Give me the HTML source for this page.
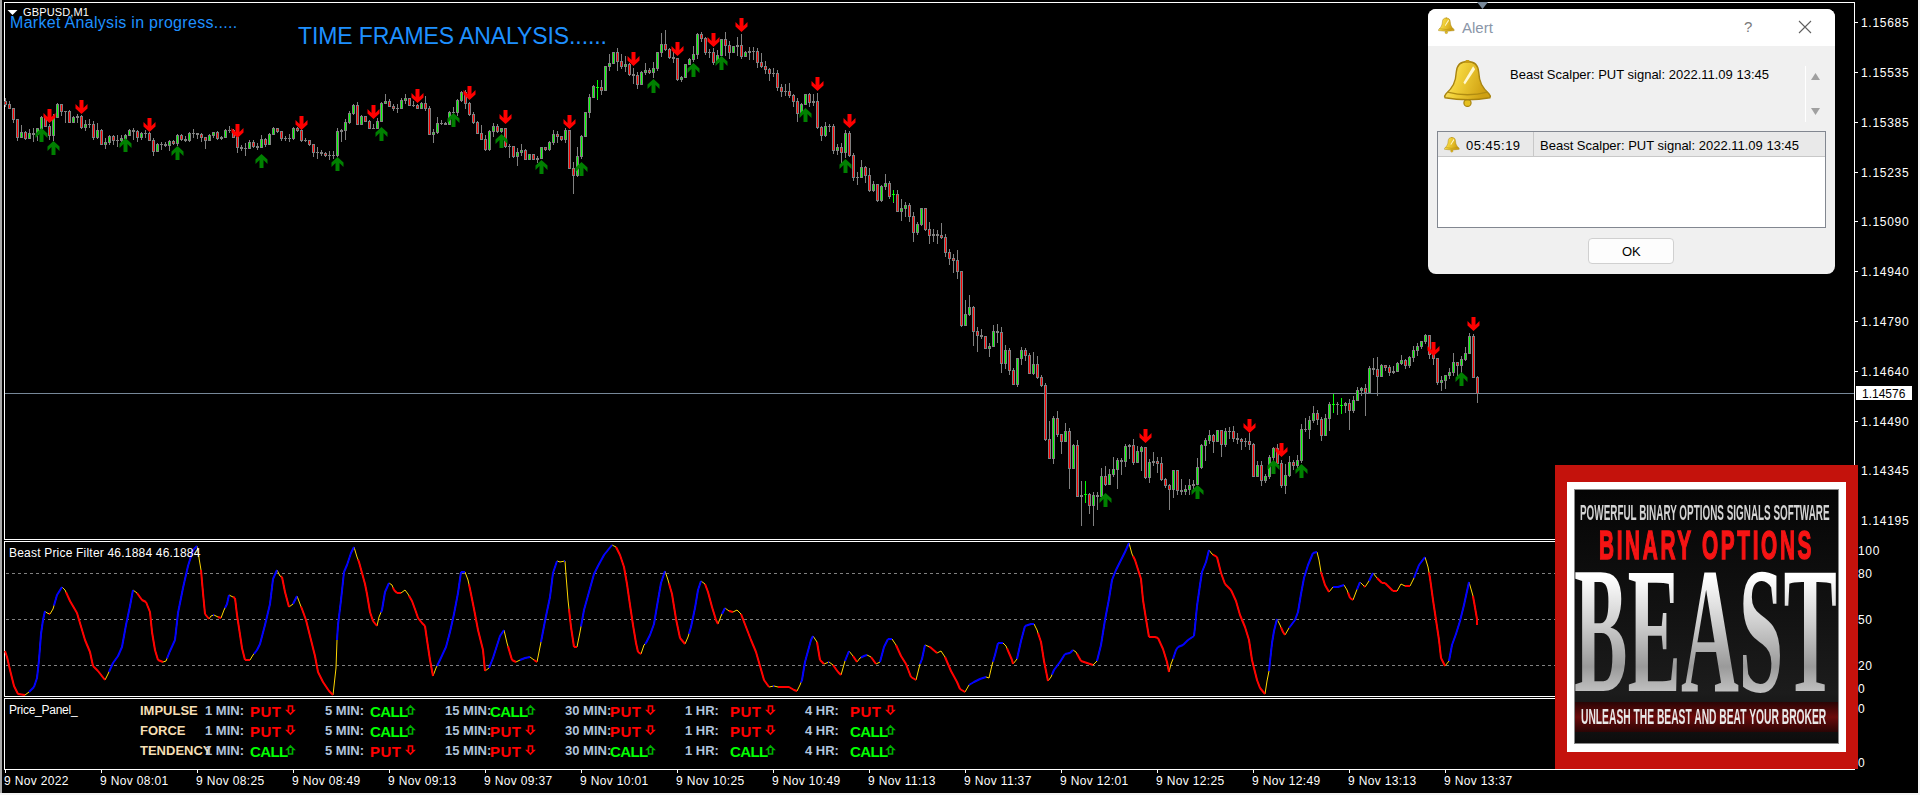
<!DOCTYPE html><html><head><meta charset="utf-8"><style>

*{margin:0;padding:0;box-sizing:border-box}
html,body{width:1920px;height:795px;overflow:hidden;background:#000}
body{position:relative;font-family:"Liberation Sans",sans-serif}
#chart{position:absolute;left:0;top:0}
.t{position:absolute;white-space:nowrap;line-height:1}
.w{color:#fff}
.pl{font-size:12px;color:#fff;left:1861px;letter-spacing:0.7px}
.tl{font-size:12px;color:#fff;top:775px;letter-spacing:0.35px}
.pp{font-weight:bold;font-size:13px}
.lab{color:#f5deb3}
.mn{color:#b0c4de}
.put{color:#ff0000;font-size:15px;letter-spacing:0.4px}
.call{color:#00ff00;font-size:15px;letter-spacing:-0.6px}

</style></head><body>
<svg id="chart" width="1920" height="795" viewBox="0 0 1920 795" shape-rendering="crispEdges">
<g fill="#ffffff">
<rect x="4" y="2" width="1851" height="1"/><rect x="4" y="539" width="1851" height="1"/>
<rect x="4" y="2" width="1" height="538"/><rect x="1854" y="2" width="1" height="538"/>
<rect x="4" y="541" width="1851" height="1"/><rect x="4" y="696" width="1851" height="1"/>
<rect x="4" y="541" width="1" height="156"/><rect x="1854" y="541" width="1" height="156"/>
<rect x="4" y="698" width="1851" height="1"/><rect x="4" y="769" width="1851" height="1"/>
<rect x="4" y="698" width="1" height="72"/><rect x="1854" y="698" width="1" height="72"/>
<rect x="1855" y="22" width="3" height="1"/>
<rect x="1855" y="72" width="3" height="1"/>
<rect x="1855" y="122" width="3" height="1"/>
<rect x="1855" y="172" width="3" height="1"/>
<rect x="1855" y="221" width="3" height="1"/>
<rect x="1855" y="271" width="3" height="1"/>
<rect x="1855" y="321" width="3" height="1"/>
<rect x="1855" y="371" width="3" height="1"/>
<rect x="1855" y="421" width="3" height="1"/>
<rect x="1855" y="470" width="3" height="1"/>
<rect x="1855" y="520" width="3" height="1"/>
<rect x="5" y="770" width="1" height="3"/>
<rect x="101" y="770" width="1" height="3"/>
<rect x="197" y="770" width="1" height="3"/>
<rect x="293" y="770" width="1" height="3"/>
<rect x="389" y="770" width="1" height="3"/>
<rect x="485" y="770" width="1" height="3"/>
<rect x="581" y="770" width="1" height="3"/>
<rect x="677" y="770" width="1" height="3"/>
<rect x="773" y="770" width="1" height="3"/>
<rect x="869" y="770" width="1" height="3"/>
<rect x="965" y="770" width="1" height="3"/>
<rect x="1061" y="770" width="1" height="3"/>
<rect x="1157" y="770" width="1" height="3"/>
<rect x="1253" y="770" width="1" height="3"/>
<rect x="1349" y="770" width="1" height="3"/>
<rect x="1445" y="770" width="1" height="3"/>
</g>
<rect x="0" y="0" width="2" height="795" fill="#a9a9a9"/>
<rect x="1918" y="0" width="2" height="795" fill="#f4f4f4"/>
<rect x="0" y="793" width="1920" height="2" fill="#f4f4f4"/>
<path d="M6 573.5H1853" stroke="#808080" stroke-width="1" stroke-dasharray="3 3"/>
<path d="M6 619.5H1853" stroke="#808080" stroke-width="1" stroke-dasharray="3 3"/>
<path d="M6 665.5H1853" stroke="#808080" stroke-width="1" stroke-dasharray="3 3"/>
<rect x="5" y="393" width="1849" height="1" fill="#778899"/>
<polygon points="1477,2 1488,2 1482.5,9" fill="#778899" shape-rendering="auto"/>
<g shape-rendering="auto">
<path fill="none" stroke="#808080" stroke-width="1" d="M5.5 98V101M5.5 105V107M9.5 101V104M13.5 120V123M17.5 138V141M21.5 125V132M25.5 131V132M25.5 139V140M29.5 129V133M33.5 128V133M33.5 135V142M37.5 135V141M41.5 116V117M45.5 116V117M49.5 124V126M49.5 136V140M53.5 114V117M53.5 136V141M57.5 103V104M61.5 112V116M65.5 112V123M69.5 110V111M73.5 116V117M77.5 114V116M77.5 118V123M81.5 115V116M81.5 128V129M85.5 120V124M85.5 128V131M89.5 119V124M89.5 125V128M93.5 121V124M93.5 138V140M97.5 123V130M97.5 138V139M101.5 129V130M105.5 138V142M105.5 145V149M109.5 135V136M109.5 143V145M113.5 135V136M113.5 141V145M117.5 135V140M117.5 141V147M121.5 135V138M121.5 141V144M125.5 134V135M129.5 129V130M133.5 128V130M133.5 132V140M137.5 130V131M137.5 138V142M141.5 132V133M141.5 138V140M145.5 130V133M145.5 134V138M149.5 132V133M153.5 138V140M153.5 152V156M157.5 143V144M161.5 142V144M161.5 145V150M165.5 142V144M165.5 146V147M169.5 140V141M169.5 146V151M173.5 140V141M173.5 144V145M177.5 134V135M177.5 144V146M181.5 134V135M181.5 140V141M185.5 136V139M185.5 141V142M189.5 132V133M189.5 141V142M193.5 129V133M193.5 134V138M197.5 135V139M201.5 133V134M201.5 138V142M205.5 141V149M209.5 134V135M213.5 136V138M217.5 131V132M217.5 139V140M221.5 136V137M221.5 139V140M225.5 129V130M229.5 126V130M229.5 131V133M233.5 129V130M237.5 136V137M237.5 148V153M241.5 145V147M241.5 149V151M245.5 143V148M245.5 149V156M249.5 140V142M253.5 140V142M253.5 147V148M257.5 143V146M257.5 148V150M261.5 135V139M265.5 138V139M265.5 145V147M269.5 133V134M273.5 127V128M277.5 132V133M281.5 139V141M285.5 136V138M285.5 139V141M289.5 134V138M289.5 139V142M293.5 127V128M293.5 139V140M297.5 127V128M297.5 131V132M301.5 128V130M301.5 141V142M305.5 138V140M305.5 141V142M309.5 145V146M313.5 153V157M317.5 147V152M317.5 153V159M321.5 150V152M321.5 154V156M325.5 152V153M325.5 156V157M329.5 151V155M329.5 156V160M333.5 151V155M333.5 156V159M337.5 128V131M337.5 156V157M341.5 129V130M341.5 132V142M345.5 119V122M345.5 131V140M349.5 111V113M349.5 123V124M353.5 104V105M353.5 114V115M357.5 102V105M361.5 115V116M369.5 120V121M373.5 124V128M377.5 118V121M381.5 102V103M385.5 94V101M389.5 99V101M393.5 104V106M393.5 109V111M397.5 104V108M397.5 109V113M401.5 98V100M405.5 94V98M405.5 101V104M413.5 101V105M413.5 106V107M417.5 104V105M421.5 102V103M425.5 96V103M425.5 109V111M429.5 106V108M433.5 129V132M433.5 135V143M437.5 117V123M437.5 133V134M441.5 120V123M441.5 124V125M445.5 122V123M449.5 111V112M453.5 107V112M453.5 113V116M457.5 99V100M457.5 113V116M461.5 91V92M461.5 101V102M465.5 90V92M465.5 104V109M469.5 102V103M469.5 115V116M473.5 112V114M473.5 123V124M477.5 121V122M481.5 125V133M485.5 135V139M485.5 150V151M489.5 130V131M489.5 150V151M493.5 123V126M493.5 132V137M497.5 124V126M497.5 132V133M501.5 132V133M505.5 147V148M509.5 144V146M509.5 147V158M513.5 157V158M517.5 148V152M517.5 157V166M521.5 144V150M521.5 153V156M525.5 149V150M537.5 156V158M537.5 160V163M545.5 150V151M549.5 141V142M549.5 150V151M553.5 130V134M553.5 143V145M557.5 131V134M557.5 137V143M561.5 140V141M565.5 128V130M565.5 140V143M573.5 162V168M573.5 176V194M577.5 147V156M577.5 176V177M581.5 135V136M581.5 157V159M589.5 94V97M589.5 113V118M593.5 85V86M597.5 87V100M601.5 80V87M601.5 91V95M609.5 54V63M609.5 67V71M617.5 48V52M617.5 62V71M621.5 54V61M621.5 67V69M625.5 56V64M625.5 67V72M629.5 63V64M629.5 75V76M633.5 68V74M633.5 76V84M637.5 72V75M637.5 85V89M641.5 71V72M645.5 63V70M645.5 73V75M649.5 68V70M649.5 73V74M653.5 62V68M653.5 73V78M657.5 69V71M661.5 33V44M661.5 53V57M665.5 30V44M665.5 50V51M669.5 48V49M669.5 58V59M673.5 52V57M673.5 59V63M677.5 80V81M681.5 76V77M681.5 80V82M689.5 58V59M693.5 46V54M693.5 60V62M697.5 33V34M697.5 55V59M701.5 32V34M701.5 39V42M705.5 37V38M705.5 53V55M709.5 49V52M709.5 53V58M713.5 48V52M713.5 63V65M717.5 50V55M725.5 32V39M725.5 46V56M729.5 41V45M729.5 53V59M737.5 37V45M737.5 47V56M741.5 34V45M741.5 57V59M745.5 51V52M749.5 47V51M749.5 53V60M753.5 47V51M753.5 52V60M757.5 48V51M757.5 63V68M761.5 53V62M761.5 67V68M765.5 61V66M765.5 70V74M769.5 68V69M769.5 74V81M773.5 68V73M773.5 74V77M777.5 70V73M777.5 88V91M781.5 84V87M781.5 92V97M785.5 84V91M785.5 92V96M789.5 83V91M789.5 96V98M793.5 94V95M793.5 102V107M797.5 98V101M797.5 114V122M801.5 103V104M809.5 93V94M809.5 103V107M813.5 94V101M813.5 103V106M817.5 93V101M817.5 128V129M821.5 126V127M821.5 136V141M825.5 122V126M825.5 136V137M829.5 124V126M829.5 127V132M833.5 124V126M833.5 151V154M837.5 144V147M837.5 151V155M841.5 143V147M841.5 153V163M845.5 130V133M845.5 153V158M849.5 131V133M849.5 156V157M853.5 153V155M853.5 178V181M857.5 172V177M857.5 178V185M861.5 160V167M865.5 166V167M865.5 176V183M869.5 168V175M869.5 191V192M873.5 181V184M873.5 191V192M877.5 201V202M881.5 185V186M881.5 201V202M885.5 174V183M885.5 187V190M889.5 181V183M889.5 197V199M893.5 190V192M893.5 197V203M897.5 190V194M901.5 199V208M901.5 212V221M905.5 202V205M905.5 209V217M909.5 203V205M909.5 217V222M913.5 212V216M913.5 233V242M917.5 222V224M917.5 233V235M921.5 225V226M925.5 230V231M929.5 222V229M929.5 236V244M933.5 229V234M933.5 236V242M937.5 230V234M937.5 236V244M941.5 223V235M941.5 238V239M945.5 234V237M945.5 253V257M949.5 249V252M949.5 259V265M953.5 254V258M953.5 261V273M957.5 250V260M957.5 272V279M961.5 326V327M965.5 300V314M969.5 295V307M969.5 315V316M973.5 306V307M973.5 332V346M977.5 327V331M977.5 336V352M981.5 329V335M981.5 337V339M989.5 343V346M989.5 349V357M993.5 325V331M997.5 324V331M997.5 333V343M1001.5 327V332M1001.5 364V373M1005.5 345V350M1005.5 364V369M1009.5 348V350M1009.5 371V375M1013.5 368V370M1017.5 385V387M1021.5 347V350M1021.5 359V365M1025.5 348V350M1025.5 356V361M1029.5 353V355M1033.5 352V364M1033.5 374V375M1037.5 356V364M1037.5 378V379M1041.5 375V377M1041.5 386V387M1045.5 383V385M1045.5 440V441M1049.5 421V439M1053.5 416V418M1053.5 459V464M1057.5 411V418M1057.5 435V437M1061.5 442V454M1065.5 423V431M1069.5 428V431M1069.5 469V489M1073.5 444V445M1077.5 440V445M1081.5 481V495M1081.5 497V526M1085.5 496V503M1089.5 493V494M1089.5 506V514M1093.5 492V495M1093.5 506V526M1097.5 492V495M1097.5 497V510M1101.5 468V476M1101.5 497V498M1105.5 466V476M1105.5 485V486M1109.5 469V474M1113.5 457V469M1113.5 475V477M1117.5 458V460M1117.5 470V489M1121.5 458V460M1121.5 462V475M1125.5 444V446M1125.5 462V467M1129.5 444V445M1129.5 447V459M1133.5 439V445M1133.5 463V465M1137.5 446V451M1141.5 446V447M1141.5 452V471M1145.5 478V479M1149.5 459V462M1149.5 478V483M1153.5 452V461M1153.5 463V466M1157.5 457V461M1157.5 464V473M1161.5 457V463M1161.5 480V481M1165.5 478V479M1165.5 486V488M1169.5 484V485M1169.5 490V510M1173.5 490V498M1177.5 491V495M1181.5 479V490M1181.5 492V495M1185.5 485V489M1185.5 492V495M1189.5 479V485M1189.5 490V495M1193.5 480V484M1193.5 486V489M1197.5 458V467M1201.5 444V445M1201.5 468V469M1205.5 438V440M1205.5 446V461M1209.5 430V435M1209.5 441V444M1213.5 434V435M1213.5 442V453M1221.5 445V457M1225.5 428V431M1225.5 445V447M1229.5 427V431M1229.5 432V439M1233.5 426V431M1233.5 439V442M1237.5 433V438M1237.5 440V444M1241.5 438V439M1241.5 442V450M1245.5 438V441M1245.5 442V447M1249.5 433V441M1249.5 445V450M1253.5 443V444M1257.5 461V465M1261.5 461V465M1261.5 481V486M1265.5 474V476M1265.5 481V483M1269.5 455V457M1269.5 477V479M1273.5 447V448M1273.5 458V461M1277.5 444V448M1277.5 464V465M1281.5 460V463M1281.5 486V488M1285.5 464V475M1285.5 486V494M1289.5 456V462M1289.5 476V477M1293.5 460V462M1293.5 466V470M1297.5 455V460M1297.5 466V468M1301.5 424V429M1301.5 461V463M1305.5 418V429M1305.5 430V432M1309.5 416V420M1309.5 430V439M1313.5 406V413M1313.5 421V423M1317.5 410V413M1317.5 420V425M1321.5 417V419M1321.5 436V441M1325.5 414V418M1329.5 402V404M1329.5 419V431M1333.5 394V404M1333.5 405V413M1337.5 402V404M1337.5 405V415M1341.5 398V404M1341.5 407V414M1345.5 402V403M1345.5 406V413M1349.5 399V403M1349.5 411V430M1353.5 396V400M1353.5 411V413M1357.5 387V390M1361.5 387V388M1361.5 391V396M1365.5 384V388M1365.5 393V416M1369.5 366V368M1369.5 393V394M1373.5 358V368M1373.5 370V375M1377.5 357V369M1377.5 377V396M1381.5 364V365M1385.5 368V371M1389.5 365V367M1389.5 373V376M1393.5 366V371M1393.5 373V374M1397.5 362V363M1401.5 355V360M1401.5 364V365M1405.5 359V360M1405.5 366V369M1409.5 356V357M1409.5 366V368M1413.5 346V350M1413.5 358V362M1417.5 343V346M1417.5 351V356M1421.5 347V349M1425.5 334V335M1425.5 342V344M1429.5 355V359M1433.5 352V354M1433.5 359V365M1437.5 383V385M1441.5 376V380M1441.5 383V391M1445.5 381V389M1449.5 368V372M1449.5 376V379M1453.5 353V362M1453.5 373V376M1457.5 366V376M1461.5 356V359M1461.5 366V373M1465.5 347V353M1465.5 360V361M1469.5 333V336M1473.5 334V336M1477.5 376V377M1477.5 394V403"/>
<g fill="#808080"><rect x="4" y="101" width="3" height="4"/><rect x="8" y="104" width="3" height="5"/><rect x="12" y="108" width="3" height="12"/><rect x="16" y="119" width="3" height="19"/><rect x="20" y="132" width="3" height="6"/><rect x="24" y="132" width="3" height="7"/><rect x="28" y="133" width="3" height="6"/><rect x="32" y="133" width="3" height="2"/><rect x="36" y="128" width="3" height="7"/><rect x="40" y="117" width="3" height="12"/><rect x="44" y="117" width="3" height="10"/><rect x="48" y="126" width="3" height="10"/><rect x="52" y="117" width="3" height="19"/><rect x="56" y="104" width="3" height="14"/><rect x="60" y="104" width="3" height="8"/><rect x="64" y="111" width="3" height="1"/><rect x="68" y="111" width="3" height="12"/><rect x="72" y="117" width="3" height="6"/><rect x="76" y="116" width="3" height="2"/><rect x="80" y="116" width="3" height="12"/><rect x="84" y="124" width="3" height="4"/><rect x="88" y="124" width="3" height="1"/><rect x="92" y="124" width="3" height="14"/><rect x="96" y="130" width="3" height="8"/><rect x="100" y="130" width="3" height="15"/><rect x="104" y="142" width="3" height="3"/><rect x="108" y="136" width="3" height="7"/><rect x="112" y="136" width="3" height="5"/><rect x="116" y="140" width="3" height="1"/><rect x="120" y="138" width="3" height="3"/><rect x="124" y="135" width="3" height="4"/><rect x="128" y="130" width="3" height="6"/><rect x="132" y="130" width="3" height="2"/><rect x="136" y="131" width="3" height="7"/><rect x="140" y="133" width="3" height="5"/><rect x="144" y="133" width="3" height="1"/><rect x="148" y="133" width="3" height="8"/><rect x="152" y="140" width="3" height="12"/><rect x="156" y="144" width="3" height="8"/><rect x="160" y="144" width="3" height="1"/><rect x="164" y="144" width="3" height="2"/><rect x="168" y="141" width="3" height="5"/><rect x="172" y="141" width="3" height="3"/><rect x="176" y="135" width="3" height="9"/><rect x="180" y="135" width="3" height="5"/><rect x="184" y="139" width="3" height="2"/><rect x="188" y="133" width="3" height="8"/><rect x="192" y="133" width="3" height="1"/><rect x="196" y="133" width="3" height="2"/><rect x="200" y="134" width="3" height="4"/><rect x="204" y="137" width="3" height="4"/><rect x="208" y="135" width="3" height="6"/><rect x="212" y="132" width="3" height="4"/><rect x="216" y="132" width="3" height="7"/><rect x="220" y="137" width="3" height="2"/><rect x="224" y="130" width="3" height="8"/><rect x="228" y="130" width="3" height="1"/><rect x="232" y="130" width="3" height="8"/><rect x="236" y="137" width="3" height="11"/><rect x="240" y="147" width="3" height="2"/><rect x="244" y="148" width="3" height="1"/><rect x="248" y="142" width="3" height="7"/><rect x="252" y="142" width="3" height="5"/><rect x="256" y="146" width="3" height="2"/><rect x="260" y="139" width="3" height="9"/><rect x="264" y="139" width="3" height="6"/><rect x="268" y="134" width="3" height="11"/><rect x="272" y="128" width="3" height="7"/><rect x="276" y="128" width="3" height="4"/><rect x="280" y="131" width="3" height="8"/><rect x="284" y="138" width="3" height="1"/><rect x="288" y="138" width="3" height="1"/><rect x="292" y="128" width="3" height="11"/><rect x="296" y="128" width="3" height="3"/><rect x="300" y="130" width="3" height="11"/><rect x="304" y="140" width="3" height="1"/><rect x="308" y="140" width="3" height="5"/><rect x="312" y="144" width="3" height="9"/><rect x="316" y="152" width="3" height="1"/><rect x="320" y="152" width="3" height="2"/><rect x="324" y="153" width="3" height="3"/><rect x="328" y="155" width="3" height="1"/><rect x="332" y="155" width="3" height="1"/><rect x="336" y="131" width="3" height="25"/><rect x="340" y="130" width="3" height="2"/><rect x="344" y="122" width="3" height="9"/><rect x="348" y="113" width="3" height="10"/><rect x="352" y="105" width="3" height="9"/><rect x="356" y="105" width="3" height="20"/><rect x="360" y="116" width="3" height="9"/><rect x="364" y="116" width="3" height="6"/><rect x="368" y="121" width="3" height="8"/><rect x="372" y="128" width="3" height="1"/><rect x="376" y="121" width="3" height="8"/><rect x="380" y="103" width="3" height="19"/><rect x="384" y="101" width="3" height="3"/><rect x="388" y="101" width="3" height="6"/><rect x="392" y="106" width="3" height="3"/><rect x="396" y="108" width="3" height="1"/><rect x="400" y="100" width="3" height="9"/><rect x="404" y="98" width="3" height="3"/><rect x="408" y="98" width="3" height="8"/><rect x="412" y="105" width="3" height="1"/><rect x="416" y="105" width="3" height="4"/><rect x="420" y="103" width="3" height="6"/><rect x="424" y="103" width="3" height="6"/><rect x="428" y="108" width="3" height="27"/><rect x="432" y="132" width="3" height="3"/><rect x="436" y="123" width="3" height="10"/><rect x="440" y="123" width="3" height="1"/><rect x="444" y="123" width="3" height="2"/><rect x="448" y="112" width="3" height="13"/><rect x="452" y="112" width="3" height="1"/><rect x="456" y="100" width="3" height="13"/><rect x="460" y="92" width="3" height="9"/><rect x="464" y="92" width="3" height="12"/><rect x="468" y="103" width="3" height="12"/><rect x="472" y="114" width="3" height="9"/><rect x="476" y="122" width="3" height="12"/><rect x="480" y="133" width="3" height="7"/><rect x="484" y="139" width="3" height="11"/><rect x="488" y="131" width="3" height="19"/><rect x="492" y="126" width="3" height="6"/><rect x="496" y="126" width="3" height="6"/><rect x="500" y="128" width="3" height="4"/><rect x="504" y="128" width="3" height="19"/><rect x="508" y="146" width="3" height="1"/><rect x="512" y="146" width="3" height="11"/><rect x="516" y="152" width="3" height="5"/><rect x="520" y="150" width="3" height="3"/><rect x="524" y="150" width="3" height="10"/><rect x="528" y="154" width="3" height="6"/><rect x="532" y="154" width="3" height="6"/><rect x="536" y="158" width="3" height="2"/><rect x="540" y="147" width="3" height="12"/><rect x="544" y="147" width="3" height="3"/><rect x="548" y="142" width="3" height="8"/><rect x="552" y="134" width="3" height="9"/><rect x="556" y="134" width="3" height="3"/><rect x="560" y="136" width="3" height="4"/><rect x="564" y="130" width="3" height="10"/><rect x="568" y="130" width="3" height="39"/><rect x="572" y="168" width="3" height="8"/><rect x="576" y="156" width="3" height="20"/><rect x="580" y="136" width="3" height="21"/><rect x="584" y="112" width="3" height="25"/><rect x="588" y="97" width="3" height="16"/><rect x="592" y="86" width="3" height="12"/><rect x="600" y="87" width="3" height="4"/><rect x="604" y="66" width="3" height="25"/><rect x="608" y="63" width="3" height="4"/><rect x="612" y="52" width="3" height="12"/><rect x="616" y="52" width="3" height="10"/><rect x="620" y="61" width="3" height="6"/><rect x="624" y="64" width="3" height="3"/><rect x="628" y="64" width="3" height="11"/><rect x="632" y="74" width="3" height="2"/><rect x="636" y="75" width="3" height="10"/><rect x="640" y="72" width="3" height="13"/><rect x="644" y="70" width="3" height="3"/><rect x="648" y="70" width="3" height="3"/><rect x="652" y="68" width="3" height="5"/><rect x="656" y="52" width="3" height="17"/><rect x="660" y="44" width="3" height="9"/><rect x="664" y="44" width="3" height="6"/><rect x="668" y="49" width="3" height="9"/><rect x="672" y="57" width="3" height="2"/><rect x="676" y="58" width="3" height="22"/><rect x="680" y="77" width="3" height="3"/><rect x="684" y="64" width="3" height="14"/><rect x="688" y="59" width="3" height="6"/><rect x="692" y="54" width="3" height="6"/><rect x="696" y="34" width="3" height="21"/><rect x="700" y="34" width="3" height="5"/><rect x="704" y="38" width="3" height="15"/><rect x="708" y="52" width="3" height="1"/><rect x="712" y="52" width="3" height="11"/><rect x="716" y="55" width="3" height="8"/><rect x="720" y="39" width="3" height="17"/><rect x="724" y="39" width="3" height="7"/><rect x="728" y="45" width="3" height="8"/><rect x="732" y="46" width="3" height="7"/><rect x="736" y="45" width="3" height="2"/><rect x="740" y="45" width="3" height="12"/><rect x="744" y="52" width="3" height="5"/><rect x="748" y="51" width="3" height="2"/><rect x="752" y="51" width="3" height="1"/><rect x="756" y="51" width="3" height="12"/><rect x="760" y="62" width="3" height="5"/><rect x="764" y="66" width="3" height="4"/><rect x="768" y="69" width="3" height="5"/><rect x="772" y="73" width="3" height="1"/><rect x="776" y="73" width="3" height="15"/><rect x="780" y="87" width="3" height="5"/><rect x="784" y="91" width="3" height="1"/><rect x="788" y="91" width="3" height="5"/><rect x="792" y="95" width="3" height="7"/><rect x="796" y="101" width="3" height="13"/><rect x="800" y="104" width="3" height="10"/><rect x="804" y="94" width="3" height="11"/><rect x="808" y="94" width="3" height="9"/><rect x="812" y="101" width="3" height="2"/><rect x="816" y="101" width="3" height="27"/><rect x="820" y="127" width="3" height="9"/><rect x="824" y="126" width="3" height="10"/><rect x="828" y="126" width="3" height="1"/><rect x="832" y="126" width="3" height="25"/><rect x="836" y="147" width="3" height="4"/><rect x="840" y="147" width="3" height="6"/><rect x="844" y="133" width="3" height="20"/><rect x="848" y="133" width="3" height="23"/><rect x="852" y="155" width="3" height="23"/><rect x="856" y="177" width="3" height="1"/><rect x="860" y="167" width="3" height="11"/><rect x="864" y="167" width="3" height="9"/><rect x="868" y="175" width="3" height="16"/><rect x="872" y="184" width="3" height="7"/><rect x="876" y="184" width="3" height="17"/><rect x="880" y="186" width="3" height="15"/><rect x="884" y="183" width="3" height="4"/><rect x="888" y="183" width="3" height="14"/><rect x="896" y="194" width="3" height="18"/><rect x="900" y="208" width="3" height="4"/><rect x="904" y="205" width="3" height="4"/><rect x="908" y="205" width="3" height="12"/><rect x="912" y="216" width="3" height="17"/><rect x="916" y="224" width="3" height="9"/><rect x="920" y="208" width="3" height="17"/><rect x="924" y="208" width="3" height="22"/><rect x="928" y="229" width="3" height="7"/><rect x="932" y="234" width="3" height="2"/><rect x="936" y="234" width="3" height="2"/><rect x="940" y="235" width="3" height="3"/><rect x="944" y="237" width="3" height="16"/><rect x="948" y="252" width="3" height="7"/><rect x="952" y="258" width="3" height="3"/><rect x="956" y="260" width="3" height="12"/><rect x="960" y="271" width="3" height="55"/><rect x="964" y="314" width="3" height="12"/><rect x="968" y="307" width="3" height="8"/><rect x="972" y="307" width="3" height="25"/><rect x="976" y="331" width="3" height="5"/><rect x="980" y="335" width="3" height="2"/><rect x="984" y="336" width="3" height="13"/><rect x="988" y="346" width="3" height="3"/><rect x="992" y="331" width="3" height="16"/><rect x="996" y="331" width="3" height="2"/><rect x="1000" y="332" width="3" height="32"/><rect x="1004" y="350" width="3" height="14"/><rect x="1008" y="350" width="3" height="21"/><rect x="1012" y="370" width="3" height="15"/><rect x="1016" y="358" width="3" height="27"/><rect x="1020" y="350" width="3" height="9"/><rect x="1024" y="350" width="3" height="6"/><rect x="1028" y="355" width="3" height="19"/><rect x="1032" y="364" width="3" height="10"/><rect x="1036" y="364" width="3" height="14"/><rect x="1040" y="377" width="3" height="9"/><rect x="1044" y="385" width="3" height="55"/><rect x="1048" y="439" width="3" height="20"/><rect x="1052" y="418" width="3" height="41"/><rect x="1056" y="418" width="3" height="17"/><rect x="1060" y="434" width="3" height="8"/><rect x="1064" y="431" width="3" height="11"/><rect x="1068" y="431" width="3" height="38"/><rect x="1072" y="445" width="3" height="24"/><rect x="1076" y="445" width="3" height="52"/><rect x="1080" y="495" width="3" height="2"/><rect x="1088" y="494" width="3" height="12"/><rect x="1092" y="495" width="3" height="11"/><rect x="1096" y="495" width="3" height="2"/><rect x="1100" y="476" width="3" height="21"/><rect x="1104" y="476" width="3" height="9"/><rect x="1108" y="474" width="3" height="11"/><rect x="1112" y="469" width="3" height="6"/><rect x="1116" y="460" width="3" height="10"/><rect x="1120" y="460" width="3" height="2"/><rect x="1124" y="446" width="3" height="16"/><rect x="1128" y="445" width="3" height="2"/><rect x="1132" y="445" width="3" height="18"/><rect x="1136" y="451" width="3" height="12"/><rect x="1140" y="447" width="3" height="5"/><rect x="1144" y="447" width="3" height="31"/><rect x="1148" y="462" width="3" height="16"/><rect x="1152" y="461" width="3" height="2"/><rect x="1156" y="461" width="3" height="3"/><rect x="1160" y="463" width="3" height="17"/><rect x="1164" y="479" width="3" height="7"/><rect x="1168" y="485" width="3" height="5"/><rect x="1172" y="470" width="3" height="20"/><rect x="1176" y="470" width="3" height="21"/><rect x="1180" y="490" width="3" height="2"/><rect x="1184" y="489" width="3" height="3"/><rect x="1188" y="485" width="3" height="5"/><rect x="1192" y="484" width="3" height="2"/><rect x="1196" y="467" width="3" height="18"/><rect x="1200" y="445" width="3" height="23"/><rect x="1204" y="440" width="3" height="6"/><rect x="1208" y="435" width="3" height="6"/><rect x="1212" y="435" width="3" height="7"/><rect x="1216" y="430" width="3" height="12"/><rect x="1220" y="430" width="3" height="15"/><rect x="1224" y="431" width="3" height="14"/><rect x="1228" y="431" width="3" height="1"/><rect x="1232" y="431" width="3" height="8"/><rect x="1236" y="438" width="3" height="2"/><rect x="1240" y="439" width="3" height="3"/><rect x="1244" y="441" width="3" height="1"/><rect x="1248" y="441" width="3" height="4"/><rect x="1252" y="444" width="3" height="33"/><rect x="1256" y="465" width="3" height="12"/><rect x="1260" y="465" width="3" height="16"/><rect x="1264" y="476" width="3" height="5"/><rect x="1268" y="457" width="3" height="20"/><rect x="1272" y="448" width="3" height="10"/><rect x="1276" y="448" width="3" height="16"/><rect x="1280" y="463" width="3" height="23"/><rect x="1284" y="475" width="3" height="11"/><rect x="1288" y="462" width="3" height="14"/><rect x="1292" y="462" width="3" height="4"/><rect x="1296" y="460" width="3" height="6"/><rect x="1300" y="429" width="3" height="32"/><rect x="1304" y="429" width="3" height="1"/><rect x="1308" y="420" width="3" height="10"/><rect x="1312" y="413" width="3" height="8"/><rect x="1316" y="413" width="3" height="7"/><rect x="1320" y="419" width="3" height="17"/><rect x="1324" y="418" width="3" height="18"/><rect x="1328" y="404" width="3" height="15"/><rect x="1336" y="404" width="3" height="1"/><rect x="1344" y="403" width="3" height="3"/><rect x="1348" y="403" width="3" height="8"/><rect x="1352" y="400" width="3" height="11"/><rect x="1356" y="390" width="3" height="11"/><rect x="1360" y="388" width="3" height="3"/><rect x="1364" y="388" width="3" height="5"/><rect x="1368" y="368" width="3" height="25"/><rect x="1372" y="368" width="3" height="2"/><rect x="1376" y="369" width="3" height="8"/><rect x="1380" y="365" width="3" height="12"/><rect x="1384" y="365" width="3" height="3"/><rect x="1388" y="367" width="3" height="6"/><rect x="1392" y="371" width="3" height="2"/><rect x="1396" y="363" width="3" height="9"/><rect x="1400" y="360" width="3" height="4"/><rect x="1404" y="360" width="3" height="6"/><rect x="1408" y="357" width="3" height="9"/><rect x="1412" y="350" width="3" height="8"/><rect x="1416" y="346" width="3" height="5"/><rect x="1420" y="341" width="3" height="6"/><rect x="1424" y="335" width="3" height="7"/><rect x="1428" y="335" width="3" height="20"/><rect x="1432" y="354" width="3" height="5"/><rect x="1436" y="358" width="3" height="25"/><rect x="1440" y="380" width="3" height="3"/><rect x="1444" y="375" width="3" height="6"/><rect x="1448" y="372" width="3" height="4"/><rect x="1452" y="362" width="3" height="11"/><rect x="1456" y="362" width="3" height="4"/><rect x="1460" y="359" width="3" height="7"/><rect x="1464" y="353" width="3" height="7"/><rect x="1468" y="336" width="3" height="18"/><rect x="1472" y="336" width="3" height="42"/><rect x="1476" y="377" width="3" height="17"/></g>
<g fill="#00ff00"><rect x="21" y="133" width="1" height="4"/><rect x="29" y="134" width="1" height="4"/><rect x="37" y="129" width="1" height="5"/><rect x="41" y="118" width="1" height="10"/><rect x="53" y="118" width="1" height="17"/><rect x="57" y="105" width="1" height="12"/><rect x="73" y="118" width="1" height="4"/><rect x="85" y="125" width="1" height="2"/><rect x="97" y="131" width="1" height="6"/><rect x="105" y="143" width="1" height="1"/><rect x="109" y="137" width="1" height="5"/><rect x="121" y="139" width="1" height="1"/><rect x="125" y="136" width="1" height="2"/><rect x="129" y="131" width="1" height="4"/><rect x="141" y="134" width="1" height="3"/><rect x="157" y="145" width="1" height="6"/><rect x="169" y="142" width="1" height="3"/><rect x="177" y="136" width="1" height="7"/><rect x="189" y="134" width="1" height="6"/><rect x="209" y="136" width="1" height="4"/><rect x="213" y="133" width="1" height="2"/><rect x="225" y="131" width="1" height="6"/><rect x="249" y="143" width="1" height="5"/><rect x="261" y="140" width="1" height="7"/><rect x="269" y="135" width="1" height="9"/><rect x="273" y="129" width="1" height="5"/><rect x="293" y="129" width="1" height="9"/><rect x="337" y="132" width="1" height="23"/><rect x="345" y="123" width="1" height="7"/><rect x="349" y="114" width="1" height="8"/><rect x="353" y="106" width="1" height="7"/><rect x="361" y="117" width="1" height="7"/><rect x="377" y="122" width="1" height="6"/><rect x="381" y="104" width="1" height="17"/><rect x="385" y="102" width="1" height="1"/><rect x="401" y="101" width="1" height="7"/><rect x="405" y="99" width="1" height="1"/><rect x="421" y="104" width="1" height="4"/><rect x="433" y="133" width="1" height="1"/><rect x="437" y="124" width="1" height="8"/><rect x="449" y="113" width="1" height="11"/><rect x="457" y="101" width="1" height="11"/><rect x="461" y="93" width="1" height="7"/><rect x="489" y="132" width="1" height="17"/><rect x="493" y="127" width="1" height="4"/><rect x="501" y="129" width="1" height="2"/><rect x="517" y="153" width="1" height="3"/><rect x="521" y="151" width="1" height="1"/><rect x="529" y="155" width="1" height="4"/><rect x="541" y="148" width="1" height="10"/><rect x="549" y="143" width="1" height="6"/><rect x="553" y="135" width="1" height="7"/><rect x="565" y="131" width="1" height="8"/><rect x="577" y="157" width="1" height="18"/><rect x="581" y="137" width="1" height="19"/><rect x="585" y="113" width="1" height="23"/><rect x="589" y="98" width="1" height="14"/><rect x="593" y="87" width="1" height="10"/><rect x="605" y="67" width="1" height="23"/><rect x="609" y="64" width="1" height="2"/><rect x="613" y="53" width="1" height="10"/><rect x="625" y="65" width="1" height="1"/><rect x="641" y="73" width="1" height="11"/><rect x="645" y="71" width="1" height="1"/><rect x="653" y="69" width="1" height="3"/><rect x="657" y="53" width="1" height="15"/><rect x="661" y="45" width="1" height="7"/><rect x="681" y="78" width="1" height="1"/><rect x="685" y="65" width="1" height="12"/><rect x="689" y="60" width="1" height="4"/><rect x="693" y="55" width="1" height="4"/><rect x="697" y="35" width="1" height="19"/><rect x="717" y="56" width="1" height="6"/><rect x="721" y="40" width="1" height="15"/><rect x="733" y="47" width="1" height="5"/><rect x="745" y="53" width="1" height="3"/><rect x="801" y="105" width="1" height="8"/><rect x="805" y="95" width="1" height="9"/><rect x="825" y="127" width="1" height="8"/><rect x="837" y="148" width="1" height="2"/><rect x="845" y="134" width="1" height="18"/><rect x="861" y="168" width="1" height="9"/><rect x="873" y="185" width="1" height="5"/><rect x="881" y="187" width="1" height="13"/><rect x="885" y="184" width="1" height="2"/><rect x="901" y="209" width="1" height="2"/><rect x="905" y="206" width="1" height="2"/><rect x="917" y="225" width="1" height="7"/><rect x="921" y="209" width="1" height="15"/><rect x="965" y="315" width="1" height="10"/><rect x="969" y="308" width="1" height="6"/><rect x="989" y="347" width="1" height="1"/><rect x="993" y="332" width="1" height="14"/><rect x="1005" y="351" width="1" height="12"/><rect x="1017" y="359" width="1" height="25"/><rect x="1021" y="351" width="1" height="7"/><rect x="1033" y="365" width="1" height="8"/><rect x="1053" y="419" width="1" height="39"/><rect x="1065" y="432" width="1" height="9"/><rect x="1073" y="446" width="1" height="22"/><rect x="1093" y="496" width="1" height="9"/><rect x="1101" y="477" width="1" height="19"/><rect x="1109" y="475" width="1" height="9"/><rect x="1113" y="470" width="1" height="4"/><rect x="1117" y="461" width="1" height="8"/><rect x="1125" y="447" width="1" height="14"/><rect x="1137" y="452" width="1" height="10"/><rect x="1141" y="448" width="1" height="3"/><rect x="1149" y="463" width="1" height="14"/><rect x="1173" y="471" width="1" height="18"/><rect x="1185" y="490" width="1" height="1"/><rect x="1189" y="486" width="1" height="3"/><rect x="1197" y="468" width="1" height="16"/><rect x="1201" y="446" width="1" height="21"/><rect x="1205" y="441" width="1" height="4"/><rect x="1209" y="436" width="1" height="4"/><rect x="1217" y="431" width="1" height="10"/><rect x="1225" y="432" width="1" height="12"/><rect x="1257" y="466" width="1" height="10"/><rect x="1265" y="477" width="1" height="3"/><rect x="1269" y="458" width="1" height="18"/><rect x="1273" y="449" width="1" height="8"/><rect x="1285" y="476" width="1" height="9"/><rect x="1289" y="463" width="1" height="12"/><rect x="1297" y="461" width="1" height="4"/><rect x="1301" y="430" width="1" height="30"/><rect x="1309" y="421" width="1" height="8"/><rect x="1313" y="414" width="1" height="6"/><rect x="1325" y="419" width="1" height="16"/><rect x="1329" y="405" width="1" height="13"/><rect x="1345" y="404" width="1" height="1"/><rect x="1353" y="401" width="1" height="9"/><rect x="1357" y="391" width="1" height="9"/><rect x="1361" y="389" width="1" height="1"/><rect x="1369" y="369" width="1" height="23"/><rect x="1381" y="366" width="1" height="10"/><rect x="1397" y="364" width="1" height="7"/><rect x="1401" y="361" width="1" height="2"/><rect x="1409" y="358" width="1" height="7"/><rect x="1413" y="351" width="1" height="6"/><rect x="1417" y="347" width="1" height="3"/><rect x="1421" y="342" width="1" height="4"/><rect x="1425" y="336" width="1" height="5"/><rect x="1441" y="381" width="1" height="1"/><rect x="1445" y="376" width="1" height="4"/><rect x="1449" y="373" width="1" height="2"/><rect x="1453" y="363" width="1" height="9"/><rect x="1461" y="360" width="1" height="5"/><rect x="1465" y="354" width="1" height="5"/><rect x="1469" y="337" width="1" height="16"/></g>
<g fill="#ff0000"><rect x="5" y="102" width="1" height="2"/><rect x="9" y="105" width="1" height="3"/><rect x="13" y="109" width="1" height="10"/><rect x="17" y="120" width="1" height="17"/><rect x="25" y="133" width="1" height="5"/><rect x="45" y="118" width="1" height="8"/><rect x="49" y="127" width="1" height="8"/><rect x="61" y="105" width="1" height="6"/><rect x="69" y="112" width="1" height="10"/><rect x="81" y="117" width="1" height="10"/><rect x="93" y="125" width="1" height="12"/><rect x="101" y="131" width="1" height="13"/><rect x="113" y="137" width="1" height="3"/><rect x="137" y="132" width="1" height="5"/><rect x="149" y="134" width="1" height="6"/><rect x="153" y="141" width="1" height="10"/><rect x="173" y="142" width="1" height="1"/><rect x="181" y="136" width="1" height="3"/><rect x="201" y="135" width="1" height="2"/><rect x="205" y="138" width="1" height="2"/><rect x="217" y="133" width="1" height="5"/><rect x="233" y="131" width="1" height="6"/><rect x="237" y="138" width="1" height="9"/><rect x="253" y="143" width="1" height="3"/><rect x="265" y="140" width="1" height="4"/><rect x="277" y="129" width="1" height="2"/><rect x="281" y="132" width="1" height="6"/><rect x="297" y="129" width="1" height="1"/><rect x="301" y="131" width="1" height="9"/><rect x="309" y="141" width="1" height="3"/><rect x="313" y="145" width="1" height="7"/><rect x="325" y="154" width="1" height="1"/><rect x="357" y="106" width="1" height="18"/><rect x="365" y="117" width="1" height="4"/><rect x="369" y="122" width="1" height="6"/><rect x="389" y="102" width="1" height="4"/><rect x="393" y="107" width="1" height="1"/><rect x="409" y="99" width="1" height="6"/><rect x="417" y="106" width="1" height="2"/><rect x="425" y="104" width="1" height="4"/><rect x="429" y="109" width="1" height="25"/><rect x="465" y="93" width="1" height="10"/><rect x="469" y="104" width="1" height="10"/><rect x="473" y="115" width="1" height="7"/><rect x="477" y="123" width="1" height="10"/><rect x="481" y="134" width="1" height="5"/><rect x="485" y="140" width="1" height="9"/><rect x="497" y="127" width="1" height="4"/><rect x="505" y="129" width="1" height="17"/><rect x="513" y="147" width="1" height="9"/><rect x="525" y="151" width="1" height="8"/><rect x="533" y="155" width="1" height="4"/><rect x="545" y="148" width="1" height="1"/><rect x="557" y="135" width="1" height="1"/><rect x="561" y="137" width="1" height="2"/><rect x="569" y="131" width="1" height="37"/><rect x="573" y="169" width="1" height="6"/><rect x="601" y="88" width="1" height="2"/><rect x="617" y="53" width="1" height="8"/><rect x="621" y="62" width="1" height="4"/><rect x="629" y="65" width="1" height="9"/><rect x="637" y="76" width="1" height="8"/><rect x="649" y="71" width="1" height="1"/><rect x="665" y="45" width="1" height="4"/><rect x="669" y="50" width="1" height="7"/><rect x="677" y="59" width="1" height="20"/><rect x="701" y="35" width="1" height="3"/><rect x="705" y="39" width="1" height="13"/><rect x="713" y="53" width="1" height="9"/><rect x="725" y="40" width="1" height="5"/><rect x="729" y="46" width="1" height="6"/><rect x="741" y="46" width="1" height="10"/><rect x="757" y="52" width="1" height="10"/><rect x="761" y="63" width="1" height="3"/><rect x="765" y="67" width="1" height="2"/><rect x="769" y="70" width="1" height="3"/><rect x="777" y="74" width="1" height="13"/><rect x="781" y="88" width="1" height="3"/><rect x="789" y="92" width="1" height="3"/><rect x="793" y="96" width="1" height="5"/><rect x="797" y="102" width="1" height="11"/><rect x="809" y="95" width="1" height="7"/><rect x="817" y="102" width="1" height="25"/><rect x="821" y="128" width="1" height="7"/><rect x="833" y="127" width="1" height="23"/><rect x="841" y="148" width="1" height="4"/><rect x="849" y="134" width="1" height="21"/><rect x="853" y="156" width="1" height="21"/><rect x="865" y="168" width="1" height="7"/><rect x="869" y="176" width="1" height="14"/><rect x="877" y="185" width="1" height="15"/><rect x="889" y="184" width="1" height="12"/><rect x="897" y="195" width="1" height="16"/><rect x="909" y="206" width="1" height="10"/><rect x="913" y="217" width="1" height="15"/><rect x="925" y="209" width="1" height="20"/><rect x="929" y="230" width="1" height="5"/><rect x="941" y="236" width="1" height="1"/><rect x="945" y="238" width="1" height="14"/><rect x="949" y="253" width="1" height="5"/><rect x="953" y="259" width="1" height="1"/><rect x="957" y="261" width="1" height="10"/><rect x="961" y="272" width="1" height="53"/><rect x="973" y="308" width="1" height="23"/><rect x="977" y="332" width="1" height="3"/><rect x="985" y="337" width="1" height="11"/><rect x="1001" y="333" width="1" height="30"/><rect x="1009" y="351" width="1" height="19"/><rect x="1013" y="371" width="1" height="13"/><rect x="1025" y="351" width="1" height="4"/><rect x="1029" y="356" width="1" height="17"/><rect x="1037" y="365" width="1" height="12"/><rect x="1041" y="378" width="1" height="7"/><rect x="1045" y="386" width="1" height="53"/><rect x="1049" y="440" width="1" height="18"/><rect x="1057" y="419" width="1" height="15"/><rect x="1061" y="435" width="1" height="6"/><rect x="1069" y="432" width="1" height="36"/><rect x="1077" y="446" width="1" height="50"/><rect x="1089" y="495" width="1" height="10"/><rect x="1105" y="477" width="1" height="7"/><rect x="1133" y="446" width="1" height="16"/><rect x="1145" y="448" width="1" height="29"/><rect x="1157" y="462" width="1" height="1"/><rect x="1161" y="464" width="1" height="15"/><rect x="1165" y="480" width="1" height="5"/><rect x="1169" y="486" width="1" height="3"/><rect x="1177" y="471" width="1" height="19"/><rect x="1213" y="436" width="1" height="5"/><rect x="1221" y="431" width="1" height="13"/><rect x="1233" y="432" width="1" height="6"/><rect x="1241" y="440" width="1" height="1"/><rect x="1249" y="442" width="1" height="2"/><rect x="1253" y="445" width="1" height="31"/><rect x="1261" y="466" width="1" height="14"/><rect x="1277" y="449" width="1" height="14"/><rect x="1281" y="464" width="1" height="21"/><rect x="1293" y="463" width="1" height="2"/><rect x="1317" y="414" width="1" height="5"/><rect x="1321" y="420" width="1" height="15"/><rect x="1349" y="404" width="1" height="6"/><rect x="1365" y="389" width="1" height="3"/><rect x="1377" y="370" width="1" height="6"/><rect x="1385" y="366" width="1" height="1"/><rect x="1389" y="368" width="1" height="4"/><rect x="1405" y="361" width="1" height="4"/><rect x="1429" y="336" width="1" height="18"/><rect x="1433" y="355" width="1" height="3"/><rect x="1437" y="359" width="1" height="23"/><rect x="1457" y="363" width="1" height="2"/><rect x="1473" y="337" width="1" height="40"/><rect x="1477" y="378" width="1" height="15"/></g>
<path fill="none" stroke="#00ff00" stroke-width="1" d="M597.5 80V99M596 87.5H599M893.5 190V202M892 194.5H895M1085.5 481V503M1084 494.5H1087M1333.5 394V413M1332 404.5H1335M1341.5 398V414M1340 405.5H1343"/>
<polygon fill="#008000" points="39.5,142.0 43.5,142.0 43.5,134.0 47.5,138.0 47.5,133.5 41.5,128.0 35.5,133.5 35.5,138.0 39.5,134.0"/>
<polygon fill="#ff0000" points="47.5,109.0 51.5,109.0 51.5,117.0 55.5,113.0 55.5,117.5 49.5,123.0 43.5,117.5 43.5,113.0 47.5,117.0"/>
<polygon fill="#008000" points="51.5,155.0 55.5,155.0 55.5,147.0 59.5,151.0 59.5,146.5 53.5,141.0 47.5,146.5 47.5,151.0 51.5,147.0"/>
<polygon fill="#ff0000" points="79.5,100.0 83.5,100.0 83.5,108.0 87.5,104.0 87.5,108.5 81.5,114.0 75.5,108.5 75.5,104.0 79.5,108.0"/>
<polygon fill="#008000" points="123.5,152.0 127.5,152.0 127.5,144.0 131.5,148.0 131.5,143.5 125.5,138.0 119.5,143.5 119.5,148.0 123.5,144.0"/>
<polygon fill="#ff0000" points="147.5,118.0 151.5,118.0 151.5,126.0 155.5,122.0 155.5,126.5 149.5,132.0 143.5,126.5 143.5,122.0 147.5,126.0"/>
<polygon fill="#008000" points="175.5,160.0 179.5,160.0 179.5,152.0 183.5,156.0 183.5,151.5 177.5,146.0 171.5,151.5 171.5,156.0 175.5,152.0"/>
<polygon fill="#ff0000" points="235.5,124.0 239.5,124.0 239.5,132.0 243.5,128.0 243.5,132.5 237.5,138.0 231.5,132.5 231.5,128.0 235.5,132.0"/>
<polygon fill="#008000" points="259.5,168.0 263.5,168.0 263.5,160.0 267.5,164.0 267.5,159.5 261.5,154.0 255.5,159.5 255.5,164.0 259.5,160.0"/>
<polygon fill="#ff0000" points="299.5,116.0 303.5,116.0 303.5,124.0 307.5,120.0 307.5,124.5 301.5,130.0 295.5,124.5 295.5,120.0 299.5,124.0"/>
<polygon fill="#008000" points="335.5,171.0 339.5,171.0 339.5,163.0 343.5,167.0 343.5,162.5 337.5,157.0 331.5,162.5 331.5,167.0 335.5,163.0"/>
<polygon fill="#ff0000" points="371.5,105.0 375.5,105.0 375.5,113.0 379.5,109.0 379.5,113.5 373.5,119.0 367.5,113.5 367.5,109.0 371.5,113.0"/>
<polygon fill="#008000" points="379.5,141.0 383.5,141.0 383.5,133.0 387.5,137.0 387.5,132.5 381.5,127.0 375.5,132.5 375.5,137.0 379.5,133.0"/>
<polygon fill="#ff0000" points="415.5,89.0 419.5,89.0 419.5,97.0 423.5,93.0 423.5,97.5 417.5,103.0 411.5,97.5 411.5,93.0 415.5,97.0"/>
<polygon fill="#008000" points="451.5,127.0 455.5,127.0 455.5,119.0 459.5,123.0 459.5,118.5 453.5,113.0 447.5,118.5 447.5,123.0 451.5,119.0"/>
<polygon fill="#ff0000" points="467.5,86.0 471.5,86.0 471.5,94.0 475.5,90.0 475.5,94.5 469.5,100.0 463.5,94.5 463.5,90.0 467.5,94.0"/>
<polygon fill="#ff0000" points="503.5,110.0 507.5,110.0 507.5,118.0 511.5,114.0 511.5,118.5 505.5,124.0 499.5,118.5 499.5,114.0 503.5,118.0"/>
<polygon fill="#008000" points="499.5,148.0 503.5,148.0 503.5,140.0 507.5,144.0 507.5,139.5 501.5,134.0 495.5,139.5 495.5,144.0 499.5,140.0"/>
<polygon fill="#008000" points="539.5,174.0 543.5,174.0 543.5,166.0 547.5,170.0 547.5,165.5 541.5,160.0 535.5,165.5 535.5,170.0 539.5,166.0"/>
<polygon fill="#ff0000" points="567.5,115.0 571.5,115.0 571.5,123.0 575.5,119.0 575.5,123.5 569.5,129.0 563.5,123.5 563.5,119.0 567.5,123.0"/>
<polygon fill="#008000" points="579.5,176.0 583.5,176.0 583.5,168.0 587.5,172.0 587.5,167.5 581.5,162.0 575.5,167.5 575.5,172.0 579.5,168.0"/>
<polygon fill="#ff0000" points="631.5,52.0 635.5,52.0 635.5,60.0 639.5,56.0 639.5,60.5 633.5,66.0 627.5,60.5 627.5,56.0 631.5,60.0"/>
<polygon fill="#008000" points="651.5,93.0 655.5,93.0 655.5,85.0 659.5,89.0 659.5,84.5 653.5,79.0 647.5,84.5 647.5,89.0 651.5,85.0"/>
<polygon fill="#ff0000" points="675.5,42.0 679.5,42.0 679.5,50.0 683.5,46.0 683.5,50.5 677.5,56.0 671.5,50.5 671.5,46.0 675.5,50.0"/>
<polygon fill="#008000" points="691.5,77.0 695.5,77.0 695.5,69.0 699.5,73.0 699.5,68.5 693.5,63.0 687.5,68.5 687.5,73.0 691.5,69.0"/>
<polygon fill="#ff0000" points="711.5,33.0 715.5,33.0 715.5,41.0 719.5,37.0 719.5,41.5 713.5,47.0 707.5,41.5 707.5,37.0 711.5,41.0"/>
<polygon fill="#008000" points="719.5,70.0 723.5,70.0 723.5,62.0 727.5,66.0 727.5,61.5 721.5,56.0 715.5,61.5 715.5,66.0 719.5,62.0"/>
<polygon fill="#ff0000" points="739.5,18.0 743.5,18.0 743.5,26.0 747.5,22.0 747.5,26.5 741.5,32.0 735.5,26.5 735.5,22.0 739.5,26.0"/>
<polygon fill="#ff0000" points="815.5,77.0 819.5,77.0 819.5,85.0 823.5,81.0 823.5,85.5 817.5,91.0 811.5,85.5 811.5,81.0 815.5,85.0"/>
<polygon fill="#008000" points="803.5,122.0 807.5,122.0 807.5,114.0 811.5,118.0 811.5,113.5 805.5,108.0 799.5,113.5 799.5,118.0 803.5,114.0"/>
<polygon fill="#ff0000" points="847.5,114.0 851.5,114.0 851.5,122.0 855.5,118.0 855.5,122.5 849.5,128.0 843.5,122.5 843.5,118.0 847.5,122.0"/>
<polygon fill="#008000" points="843.5,173.0 847.5,173.0 847.5,165.0 851.5,169.0 851.5,164.5 845.5,159.0 839.5,164.5 839.5,169.0 843.5,165.0"/>
<polygon fill="#008000" points="1103.5,507.0 1107.5,507.0 1107.5,499.0 1111.5,503.0 1111.5,498.5 1105.5,493.0 1099.5,498.5 1099.5,503.0 1103.5,499.0"/>
<polygon fill="#ff0000" points="1143.5,429.0 1147.5,429.0 1147.5,437.0 1151.5,433.0 1151.5,437.5 1145.5,443.0 1139.5,437.5 1139.5,433.0 1143.5,437.0"/>
<polygon fill="#008000" points="1195.5,499.0 1199.5,499.0 1199.5,491.0 1203.5,495.0 1203.5,490.5 1197.5,485.0 1191.5,490.5 1191.5,495.0 1195.5,491.0"/>
<polygon fill="#ff0000" points="1247.5,419.0 1251.5,419.0 1251.5,427.0 1255.5,423.0 1255.5,427.5 1249.5,433.0 1243.5,427.5 1243.5,423.0 1247.5,427.0"/>
<polygon fill="#ff0000" points="1279.5,443.0 1283.5,443.0 1283.5,451.0 1287.5,447.0 1287.5,451.5 1281.5,457.0 1275.5,451.5 1275.5,447.0 1279.5,451.0"/>
<polygon fill="#008000" points="1271.5,474.0 1275.5,474.0 1275.5,466.0 1279.5,470.0 1279.5,465.5 1273.5,460.0 1267.5,465.5 1267.5,470.0 1271.5,466.0"/>
<polygon fill="#008000" points="1299.5,478.0 1303.5,478.0 1303.5,470.0 1307.5,474.0 1307.5,469.5 1301.5,464.0 1295.5,469.5 1295.5,474.0 1299.5,470.0"/>
<polygon fill="#ff0000" points="1431.5,342.0 1435.5,342.0 1435.5,350.0 1439.5,346.0 1439.5,350.5 1433.5,356.0 1427.5,350.5 1427.5,346.0 1431.5,350.0"/>
<polygon fill="#ff0000" points="1471.5,317.0 1475.5,317.0 1475.5,325.0 1479.5,321.0 1479.5,325.5 1473.5,331.0 1467.5,325.5 1467.5,321.0 1471.5,325.0"/>
<polygon fill="#008000" points="1459.5,386.0 1463.5,386.0 1463.5,378.0 1467.5,382.0 1467.5,377.5 1461.5,372.0 1455.5,377.5 1455.5,382.0 1459.5,378.0"/>
</g>
<g shape-rendering="auto">
<polyline fill="none" stroke="#ffd700" stroke-width="1" points="5,651 7,657 10,670 14,686 18,694 25,695 29,692 34,687 37,678 39,660 41,634 43,620 45,611 47,613 50,614 53,609 57,595 62,587 65,590 70,601 77,613 85,640 90,652 93,666 98,671 105,680 108,674 113,663 118,656 122,647 126,625 130,606 133,590 137,593 142,600 146,602 150,612 152,632 155,650 158,660 163,662 166,661 170,651 175,640 178,613 183,588 188,566 193,550 197,546 199,558 201,570 203,593 205,614 209,619 211,616 214,615 218,617 221,618 224,610 227,604 229,595 233,597 235,598 237,615 239,628 242,648 245,660 250,660 253,655 257,650 260,644 265,625 270,604 273,579 277,570 280,576 282,577 285,592 289,607 293,604 296,598 297,596 300,604 302,609 306,620 310,636 315,656 318,672 323,682 329,691 333,695 336,668 337,640 338,625 341,600 344,572 347,565 351,553 354,547 357,557 359,562 362,573 365,584 367,594 370,612 373,621 377,626 379,617 382,610 385,592 389,583 392,585 394,590 397,593 401,593 405,590 408,594 412,601 416,612 418,618 422,623 425,626 427,640 430,660 433,676 436,668 439,662 446,647 450,632 454,614 458,593 461,572 465,572 468,580 470,589 474,609 478,630 483,650 485,671 489,668 493,658 500,636 504,630 507,643 512,660 516,662 520,660 525,658 530,657 534,660 537,662 539,652 541,642 545,621 550,597 553,573 557,561 560,562 565,561 566,575 568,600 571,627 574,647 577,647 580,632 584,610 589,592 594,574 598,566 604,555 612,545 616,547 620,555 624,567 627,584 630,605 633,625 636,643 638,652 641,654 644,645 646,643 650,635 654,624 657,606 661,583 665,571 668,580 672,594 676,619 680,638 685,644 688,637 691,627 695,608 698,590 701,581 705,584 708,592 712,607 716,620 718,624 721,616 725,608 729,611 733,612 737,610 741,614 746,627 751,640 756,652 760,666 764,680 769,687 774,686 778,687 784,687 789,687 794,690 797,691 800,685 802,680 805,662 808,651 811,640 813,636 817,642 820,660 824,664 829,662 833,665 838,672 841,675 845,661 849,651 853,656 857,662 860,658 864,656 867,655 871,657 876,664 880,662 884,647 888,639 892,639 896,645 901,656 906,664 911,677 916,680 920,664 922,659 925,645 930,647 937,653 941,651 945,657 951,671 957,682 960,689 965,692 969,685 974,682 980,679 986,677 989,678 992,665 995,655 998,643 1003,643 1006,646 1012,660 1013,664 1017,659 1021,641 1025,626 1031,624 1034,624 1037,630 1041,642 1044,661 1048,681 1051,677 1054,670 1060,662 1065,654 1070,653 1073,650 1076,652 1081,661 1087,663 1093,665 1097,661 1101,645 1105,620 1109,599 1112,580 1116,570 1121,560 1125,552 1129,543 1132,554 1135,560 1141,579 1143,600 1146,619 1149,637 1155,637 1158,638 1163,649 1167,662 1169,672 1171,664 1173,659 1176,650 1178,647 1183,645 1188,640 1194,636 1195,627 1197,606 1200,585 1202,572 1206,562 1209,550 1212,554 1217,557 1221,573 1225,584 1231,590 1236,601 1240,615 1245,627 1249,640 1252,660 1254,668 1257,680 1260,688 1265,694 1267,681 1269,671 1272,643 1274,631 1277,619 1280,625 1283,632 1285,635 1289,628 1295,620 1298,612 1301,594 1304,578 1308,565 1313,553 1317,552 1319,560 1321,572 1325,585 1329,592 1333,587 1338,587 1344,585 1347,590 1350,598 1353,600 1356,592 1360,582 1365,587 1369,581 1373,573 1377,578 1382,583 1385,583 1393,591 1397,591 1401,584 1405,586 1410,586 1414,578 1419,565 1425,557 1428,567 1430,578 1433,600 1436,620 1439,640 1441,658 1445,666 1449,661 1452,645 1456,634 1460,621 1464,605 1469,582 1473,596 1477,619 1477,625"/>
<path fill="none" stroke="#0000ff" stroke-width="2" d="M29.0 692.0L34 687M34.0 687.0L37 678M37.0 678.0L39 660M39.0 660.0L41 634M41.0 634.0L43 620M43.0 620.0L45 611M54.0 605.5L57 595M57.0 595.0L62 587M109.0 671.8L113 663M113.0 663.0L118 656M118.0 656.0L122 647M122.0 647.0L126 625M126.0 625.0L130 606M130.0 606.0L133 590M167.0 658.5L170 651M170.0 651.0L175 640M175.0 640.0L178 613M178.0 613.0L183 588M183.0 588.0L188 566M188.0 566.0L193 550M193.0 550.0L197 546M213.0 615.3L214 615M225.0 608.0L227 604M227.0 604.0L229 595M254.0 653.8L257 650M257.0 650.0L260 644M260.0 644.0L265 625M265.0 625.0L270 604M270.0 604.0L273 579M273.0 579.0L277 570M293.0 604.0L296 598M296.0 598.0L297 596M337.0 640.0L338 625M338.0 625.0L341 600M341.0 600.0L344 572M344.0 572.0L347 565M347.0 565.0L351 553M351.0 553.0L354 547M381.0 612.3L382 610M382.0 610.0L385 592M385.0 592.0L389 583M437.0 666.0L439 662M439.0 662.0L446 647M446.0 647.0L450 632M450.0 632.0L454 614M454.0 614.0L458 593M458.0 593.0L461 572M461.0 572.0L465 572M489.0 668.0L493 658M493.0 658.0L500 636M500.0 636.0L504 630M520.0 660.0L525 658M525.0 658.0L530 657M541.0 642.0L545 621M545.0 621.0L550 597M550.0 597.0L553 573M553.0 573.0L557 561M564.0 561.2L565 561M581.0 626.5L584 610M584.0 610.0L589 592M589.0 592.0L594 574M594.0 574.0L598 566M598.0 566.0L604 555M604.0 555.0L612 545M645.0 644.0L646 643M646.0 643.0L650 635M650.0 635.0L654 624M654.0 624.0L657 606M657.0 606.0L661 583M661.0 583.0L665 571M689.0 633.7L691 627M691.0 627.0L695 608M695.0 608.0L698 590M698.0 590.0L701 581M722.0 614.0L725 608M773.0 686.2L774 686M801.0 682.5L802 680M802.0 680.0L805 662M805.0 662.0L808 651M808.0 651.0L811 640M811.0 640.0L813 636M828.0 662.4L829 662M845.0 661.0L849 651M861.0 657.5L864 656M864.0 656.0L867 655M880.0 662.0L884 647M884.0 647.0L888 639M888.0 639.0L892 639M920.0 664.0L922 659M922.0 659.0L925 645M969.0 685.0L974 682M974.0 682.0L980 679M980.0 679.0L986 677M993.0 661.7L995 655M995.0 655.0L998 643M998.0 643.0L1003 643M1017.0 659.0L1021 641M1021.0 641.0L1025 626M1025.0 626.0L1031 624M1031.0 624.0L1034 624M1052.0 674.7L1054 670M1054.0 670.0L1060 662M1060.0 662.0L1065 654M1065.0 654.0L1070 653M1070.0 653.0L1073 650M1097.0 661.0L1101 645M1101.0 645.0L1105 620M1105.0 620.0L1109 599M1109.0 599.0L1112 580M1112.0 580.0L1116 570M1116.0 570.0L1121 560M1121.0 560.0L1125 552M1125.0 552.0L1129 543M1173.0 659.0L1176 650M1176.0 650.0L1178 647M1178.0 647.0L1183 645M1183.0 645.0L1188 640M1188.0 640.0L1194 636M1194.0 636.0L1195 627M1195.0 627.0L1197 606M1197.0 606.0L1200 585M1200.0 585.0L1202 572M1202.0 572.0L1206 562M1206.0 562.0L1209 550M1269.0 671.0L1272 643M1272.0 643.0L1274 631M1274.0 631.0L1277 619M1289.0 628.0L1295 620M1295.0 620.0L1298 612M1298.0 612.0L1301 594M1301.0 594.0L1304 578M1304.0 578.0L1308 565M1308.0 565.0L1313 553M1313.0 553.0L1317 552M1333.0 587.0L1338 587M1338.0 587.0L1344 585M1357.0 589.5L1360 582M1369.0 581.0L1373 573M1414.0 578.0L1419 565M1419.0 565.0L1425 557M1449.0 661.0L1452 645M1452.0 645.0L1456 634M1456.0 634.0L1460 621M1460.0 621.0L1464 605M1464.0 605.0L1469 582"/>
<path fill="none" stroke="#ff0000" stroke-width="2" d="M5.0 651.0L7 657M7.0 657.0L10 670M10.0 670.0L14 686M14.0 686.0L18 694M18.0 694.0L25 695M49.0 613.7L50 614M66.0 592.2L70 601M70.0 601.0L77 613M77.0 613.0L85 640M85.0 640.0L90 652M90.0 652.0L93 666M93.0 666.0L98 671M98.0 671.0L105 680M137.0 593.0L142 600M142.0 600.0L146 602M146.0 602.0L150 612M150.0 612.0L152 632M152.0 632.0L155 650M155.0 650.0L158 660M158.0 660.0L163 662M201.0 570.0L203 593M203.0 593.0L205 614M205.0 614.0L209 619M218.0 617.0L221 618M233.0 597.0L235 598M235.0 598.0L237 615M237.0 615.0L239 628M239.0 628.0L242 648M242.0 648.0L245 660M245.0 660.0L250 660M281.0 576.5L282 577M282.0 577.0L285 592M285.0 592.0L289 607M301.0 606.5L302 609M302.0 609.0L306 620M306.0 620.0L310 636M310.0 636.0L315 656M315.0 656.0L318 672M318.0 672.0L323 682M323.0 682.0L329 691M329.0 691.0L333 695M358.0 559.5L359 562M359.0 562.0L362 573M362.0 573.0L365 584M365.0 584.0L367 594M367.0 594.0L370 612M370.0 612.0L373 621M373.0 621.0L377 626M393.0 587.5L394 590M394.0 590.0L397 593M397.0 593.0L401 593M409.0 595.8L412 601M412.0 601.0L416 612M416.0 612.0L418 618M418.0 618.0L422 623M422.0 623.0L425 626M425.0 626.0L427 640M427.0 640.0L430 660M430.0 660.0L433 676M469.0 584.5L470 589M470.0 589.0L474 609M474.0 609.0L478 630M478.0 630.0L483 650M483.0 650.0L485 671M508.0 646.4L512 660M512.0 660.0L516 662M534.0 660.0L537 662M569.0 609.0L571 627M571.0 627.0L574 647M574.0 647.0L577 647M616.0 547.0L620 555M620.0 555.0L624 567M624.0 567.0L627 584M627.0 584.0L630 605M630.0 605.0L633 625M633.0 625.0L636 643M636.0 643.0L638 652M638.0 652.0L641 654M669.0 583.5L672 594M672.0 594.0L676 619M676.0 619.0L680 638M680.0 638.0L685 644M705.0 584.0L708 592M708.0 592.0L712 607M712.0 607.0L716 620M716.0 620.0L718 624M729.0 611.0L733 612M741.0 614.0L746 627M746.0 627.0L751 640M751.0 640.0L756 652M756.0 652.0L760 666M760.0 666.0L764 680M764.0 680.0L769 687M778.0 687.0L784 687M784.0 687.0L789 687M789.0 687.0L794 690M794.0 690.0L797 691M817.0 642.0L820 660M820.0 660.0L824 664M833.0 665.0L838 672M838.0 672.0L841 675M853.0 656.0L857 662M871.0 657.0L876 664M896.0 645.0L901 656M901.0 656.0L906 664M906.0 664.0L911 677M911.0 677.0L916 680M929.0 646.6L930 647M930.0 647.0L937 653M945.0 657.0L951 671M951.0 671.0L957 682M957.0 682.0L960 689M960.0 689.0L965 692M1007.0 648.3L1012 660M1012.0 660.0L1013 664M1038.0 633.0L1041 642M1041.0 642.0L1044 661M1044.0 661.0L1048 681M1077.0 653.8L1081 661M1081.0 661.0L1087 663M1087.0 663.0L1093 665M1133.0 556.0L1135 560M1135.0 560.0L1141 579M1141.0 579.0L1143 600M1143.0 600.0L1146 619M1146.0 619.0L1149 637M1149.0 637.0L1155 637M1155.0 637.0L1158 638M1158.0 638.0L1163 649M1163.0 649.0L1167 662M1167.0 662.0L1169 672M1213.0 554.6L1217 557M1217.0 557.0L1221 573M1221.0 573.0L1225 584M1225.0 584.0L1231 590M1231.0 590.0L1236 601M1236.0 601.0L1240 615M1240.0 615.0L1245 627M1245.0 627.0L1249 640M1249.0 640.0L1252 660M1252.0 660.0L1254 668M1254.0 668.0L1257 680M1257.0 680.0L1260 688M1260.0 688.0L1265 694M1281.0 627.3L1283 632M1283.0 632.0L1285 635M1321.0 572.0L1325 585M1325.0 585.0L1329 592M1348.0 592.7L1350 598M1350.0 598.0L1353 600M1364.0 586.0L1365 587M1377.0 578.0L1382 583M1382.0 583.0L1385 583M1385.0 583.0L1393 591M1393.0 591.0L1397 591M1405.0 586.0L1410 586M1429.0 572.5L1430 578M1430.0 578.0L1433 600M1433.0 600.0L1436 620M1436.0 620.0L1439 640M1439.0 640.0L1441 658M1441.0 658.0L1445 666M1473.0 596.0L1477 619M1477.0 619.0L1477 625"/>
</g>
<polygon points="7.5,10 17.5,10 12.5,15" fill="#ffffff" shape-rendering="auto"/>
<g shape-rendering="auto">
<path fill="none" stroke="#ff0000" stroke-width="1.6" stroke-linejoin="miter" d="M288.5 706H292.5V710.5H294L290.5 714L287 710.5H288.5Z"/>
<path fill="none" stroke="#00b000" stroke-width="1.6" stroke-linejoin="miter" d="M410.5 706L414 709.5H412.5V714H408.5V709.5H407Z"/>
<path fill="none" stroke="#00b000" stroke-width="1.6" stroke-linejoin="miter" d="M530.5 706L534 709.5H532.5V714H528.5V709.5H527Z"/>
<path fill="none" stroke="#ff0000" stroke-width="1.6" stroke-linejoin="miter" d="M648.5 706H652.5V710.5H654L650.5 714L647 710.5H648.5Z"/>
<path fill="none" stroke="#ff0000" stroke-width="1.6" stroke-linejoin="miter" d="M768.5 706H772.5V710.5H774L770.5 714L767 710.5H768.5Z"/>
<path fill="none" stroke="#ff0000" stroke-width="1.6" stroke-linejoin="miter" d="M888.5 706H892.5V710.5H894L890.5 714L887 710.5H888.5Z"/>
<path fill="none" stroke="#ff0000" stroke-width="1.6" stroke-linejoin="miter" d="M288.5 726H292.5V730.5H294L290.5 734L287 730.5H288.5Z"/>
<path fill="none" stroke="#00b000" stroke-width="1.6" stroke-linejoin="miter" d="M410.5 726L414 729.5H412.5V734H408.5V729.5H407Z"/>
<path fill="none" stroke="#ff0000" stroke-width="1.6" stroke-linejoin="miter" d="M528.5 726H532.5V730.5H534L530.5 734L527 730.5H528.5Z"/>
<path fill="none" stroke="#ff0000" stroke-width="1.6" stroke-linejoin="miter" d="M648.5 726H652.5V730.5H654L650.5 734L647 730.5H648.5Z"/>
<path fill="none" stroke="#ff0000" stroke-width="1.6" stroke-linejoin="miter" d="M768.5 726H772.5V730.5H774L770.5 734L767 730.5H768.5Z"/>
<path fill="none" stroke="#00b000" stroke-width="1.6" stroke-linejoin="miter" d="M890.5 726L894 729.5H892.5V734H888.5V729.5H887Z"/>
<path fill="none" stroke="#00b000" stroke-width="1.6" stroke-linejoin="miter" d="M290.5 746L294 749.5H292.5V754H288.5V749.5H287Z"/>
<path fill="none" stroke="#ff0000" stroke-width="1.6" stroke-linejoin="miter" d="M408.5 746H412.5V750.5H414L410.5 754L407 750.5H408.5Z"/>
<path fill="none" stroke="#ff0000" stroke-width="1.6" stroke-linejoin="miter" d="M528.5 746H532.5V750.5H534L530.5 754L527 750.5H528.5Z"/>
<path fill="none" stroke="#00b000" stroke-width="1.6" stroke-linejoin="miter" d="M650.5 746L654 749.5H652.5V754H648.5V749.5H647Z"/>
<path fill="none" stroke="#00b000" stroke-width="1.6" stroke-linejoin="miter" d="M770.5 746L774 749.5H772.5V754H768.5V749.5H767Z"/>
<path fill="none" stroke="#00b000" stroke-width="1.6" stroke-linejoin="miter" d="M890.5 746L894 749.5H892.5V754H888.5V749.5H887Z"/>
</g>
</svg>
<div class="t w" style="left:23px;top:7px;font-size:11px;letter-spacing:0.15px">GBPUSD,M1</div>
<div class="t" style="left:10px;top:15px;font-size:16px;letter-spacing:0.3px;color:#1e90ff">Market Analysis in progress.....</div>
<div class="t" style="left:298px;top:25px;font-size:23px;letter-spacing:-0.1px;color:#1e90ff">TIME FRAMES ANALYSIS......</div>
<div class="t w" style="left:9px;top:547px;font-size:12px;letter-spacing:0.2px">Beast Price Filter 46.1884 46.1884</div>
<div class="t w" style="left:9px;top:704px;font-size:12px;letter-spacing:-0.25px">Price_Panel_</div>
<div class="t pl" style="top:17px">1.15685</div>
<div class="t pl" style="top:67px">1.15535</div>
<div class="t pl" style="top:117px">1.15385</div>
<div class="t pl" style="top:167px">1.15235</div>
<div class="t pl" style="top:216px">1.15090</div>
<div class="t pl" style="top:266px">1.14940</div>
<div class="t pl" style="top:316px">1.14790</div>
<div class="t pl" style="top:366px">1.14640</div>
<div class="t pl" style="top:416px">1.14490</div>
<div class="t pl" style="top:465px">1.14345</div>
<div class="t pl" style="top:515px">1.14195</div>
<div class="t tl" style="left:4px">9 Nov 2022</div>
<div class="t tl" style="left:100px">9 Nov 08:01</div>
<div class="t tl" style="left:196px">9 Nov 08:25</div>
<div class="t tl" style="left:292px">9 Nov 08:49</div>
<div class="t tl" style="left:388px">9 Nov 09:13</div>
<div class="t tl" style="left:484px">9 Nov 09:37</div>
<div class="t tl" style="left:580px">9 Nov 10:01</div>
<div class="t tl" style="left:676px">9 Nov 10:25</div>
<div class="t tl" style="left:772px">9 Nov 10:49</div>
<div class="t tl" style="left:868px">9 Nov 11:13</div>
<div class="t tl" style="left:964px">9 Nov 11:37</div>
<div class="t tl" style="left:1060px">9 Nov 12:01</div>
<div class="t tl" style="left:1156px">9 Nov 12:25</div>
<div class="t tl" style="left:1252px">9 Nov 12:49</div>
<div class="t tl" style="left:1348px">9 Nov 13:13</div>
<div class="t tl" style="left:1444px">9 Nov 13:37</div>
<div class="t pl" style="left:1858px;top:545px">100</div>
<div class="t pl" style="left:1858px;top:568px">80</div>
<div class="t pl" style="left:1858px;top:614px">50</div>
<div class="t pl" style="left:1858px;top:660px">20</div>
<div class="t pl" style="left:1858px;top:683px">0</div>
<div class="t pl" style="left:1858px;top:703px">0</div>
<div class="t pl" style="left:1858px;top:757px">0</div>
<div class="t" style="left:1856px;top:386px;width:56px;height:14px;background:#fff"></div>
<div class="t" style="left:1862px;top:388px;font-size:12px;color:#000">1.14576</div>
<div class="t pp lab" style="left:140px;top:704px">IMPULSE</div>
<div class="t pp mn" style="left:205px;top:704px">1 MIN:</div>
<div class="t pp put" style="left:250px;top:704px">PUT</div>
<div class="t pp mn" style="left:325px;top:704px">5 MIN:</div>
<div class="t pp call" style="left:370px;top:704px">CALL</div>
<div class="t pp mn" style="left:445px;top:704px">15 MIN:</div>
<div class="t pp call" style="left:490px;top:704px">CALL</div>
<div class="t pp mn" style="left:565px;top:704px">30 MIN:</div>
<div class="t pp put" style="left:610px;top:704px">PUT</div>
<div class="t pp mn" style="left:685px;top:704px">1 HR:</div>
<div class="t pp put" style="left:730px;top:704px">PUT</div>
<div class="t pp mn" style="left:805px;top:704px">4 HR:</div>
<div class="t pp put" style="left:850px;top:704px">PUT</div>
<div class="t pp lab" style="left:140px;top:724px">FORCE</div>
<div class="t pp mn" style="left:205px;top:724px">1 MIN:</div>
<div class="t pp put" style="left:250px;top:724px">PUT</div>
<div class="t pp mn" style="left:325px;top:724px">5 MIN:</div>
<div class="t pp call" style="left:370px;top:724px">CALL</div>
<div class="t pp mn" style="left:445px;top:724px">15 MIN:</div>
<div class="t pp put" style="left:490px;top:724px">PUT</div>
<div class="t pp mn" style="left:565px;top:724px">30 MIN:</div>
<div class="t pp put" style="left:610px;top:724px">PUT</div>
<div class="t pp mn" style="left:685px;top:724px">1 HR:</div>
<div class="t pp put" style="left:730px;top:724px">PUT</div>
<div class="t pp mn" style="left:805px;top:724px">4 HR:</div>
<div class="t pp call" style="left:850px;top:724px">CALL</div>
<div class="t pp lab" style="left:140px;top:744px">TENDENCY</div>
<div class="t pp mn" style="left:205px;top:744px">1 MIN:</div>
<div class="t pp call" style="left:250px;top:744px">CALL</div>
<div class="t pp mn" style="left:325px;top:744px">5 MIN:</div>
<div class="t pp put" style="left:370px;top:744px">PUT</div>
<div class="t pp mn" style="left:445px;top:744px">15 MIN:</div>
<div class="t pp put" style="left:490px;top:744px">PUT</div>
<div class="t pp mn" style="left:565px;top:744px">30 MIN:</div>
<div class="t pp call" style="left:610px;top:744px">CALL</div>
<div class="t pp mn" style="left:685px;top:744px">1 HR:</div>
<div class="t pp call" style="left:730px;top:744px">CALL</div>
<div class="t pp mn" style="left:805px;top:744px">4 HR:</div>
<div class="t pp call" style="left:850px;top:744px">CALL</div>
<div style="position:absolute;left:1428px;top:9px;width:407px;height:265px;background:#f0f0f0;border-radius:8px;overflow:hidden">
<div style="position:absolute;left:0;top:0;width:407px;height:37px;background:#fff"></div>

<svg width="17" height="18" viewBox="0 0 48 48" style="position:absolute;left:10px;top:8px">
<defs><linearGradient id="bga" x1="0" x2="1" y1="0" y2="0.3"><stop offset="0" stop-color="#fbeb9a"/><stop offset="0.4" stop-color="#f2d23a"/><stop offset="1" stop-color="#cfa012"/></linearGradient></defs>
<circle cx="23.5" cy="42" r="3.5" fill="#e6c020" stroke="#a88410" stroke-width="1.2"/>
<path d="M23.5 1.5 C16 1.5 13 5 12.5 12 C12 22 9 27 2.5 33 Q0.5 35 1.5 37 Q24 41 45.5 37 Q46.5 35 44.5 33 C38 27 35 22 34.5 12 C34 5 31 1.5 23.5 1.5Z" fill="url(#bga)" stroke="#a88410" stroke-width="1.4"/>
<path d="M4 31.5 Q23.5 36.5 43 31.5" fill="none" stroke="#b08c12" stroke-width="1.4"/>
<path d="M29 6 L31 9 L21 24 L19.5 22Z" fill="#fff8d0"/>
<rect x="21.5" y="0" width="4" height="3" rx="1" fill="#c89c14"/>
</svg>
<div class="t" style="left:34px;top:11px;font-size:15px;color:#8a96a8">Alert</div>
<div class="t" style="left:316px;top:10px;font-size:15px;color:#7a7a7a">?</div>
<svg width="14" height="14" style="position:absolute;left:370px;top:11px"><path d="M1 1L13 13M13 1L1 13" stroke="#606060" stroke-width="1.1" fill="none"/></svg>
<svg width="50" height="49" viewBox="0 0 48 48" style="position:absolute;left:15px;top:51px">
<defs><linearGradient id="bgb" x1="0" x2="1" y1="0" y2="0.3"><stop offset="0" stop-color="#fbeb9a"/><stop offset="0.4" stop-color="#f2d23a"/><stop offset="1" stop-color="#cfa012"/></linearGradient></defs>
<circle cx="23.5" cy="42" r="3.5" fill="#e6c020" stroke="#a88410" stroke-width="1.2"/>
<path d="M23.5 1.5 C16 1.5 13 5 12.5 12 C12 22 9 27 2.5 33 Q0.5 35 1.5 37 Q24 41 45.5 37 Q46.5 35 44.5 33 C38 27 35 22 34.5 12 C34 5 31 1.5 23.5 1.5Z" fill="url(#bgb)" stroke="#a88410" stroke-width="1.4"/>
<path d="M4 31.5 Q23.5 36.5 43 31.5" fill="none" stroke="#b08c12" stroke-width="1.4"/>
<path d="M29 6 L31 9 L21 24 L19.5 22Z" fill="#fff8d0"/>
<rect x="21.5" y="0" width="4" height="3" rx="1" fill="#c89c14"/>
</svg>
<div class="t" style="left:82px;top:59px;font-size:13px;color:#000">Beast Scalper: PUT signal: 2022.11.09 13:45</div>
<div style="position:absolute;left:377px;top:57px;width:1px;height:56px;background:#fff"></div>
<svg width="12" height="50" style="position:absolute;left:382px;top:63px"><path d="M1 8L5.5 1L10 8Z" fill="#a0a0a0"/><path d="M1 36L5.5 43L10 36Z" fill="#a0a0a0"/></svg>
<div style="position:absolute;left:9px;top:122px;width:389px;height:97px;background:#fff;border:1px solid #828790"></div>
<div style="position:absolute;left:10px;top:123px;width:387px;height:25px;background:#e9e9e9;border-bottom:1px solid #c8c8c8"></div>
<div style="position:absolute;left:105px;top:123px;width:1px;height:25px;background:#c8c8c8"></div>

<svg width="16" height="16" viewBox="0 0 48 48" style="position:absolute;left:16px;top:128px">
<defs><linearGradient id="bgc" x1="0" x2="1" y1="0" y2="0.3"><stop offset="0" stop-color="#fbeb9a"/><stop offset="0.4" stop-color="#f2d23a"/><stop offset="1" stop-color="#cfa012"/></linearGradient></defs>
<circle cx="23.5" cy="42" r="3.5" fill="#e6c020" stroke="#a88410" stroke-width="1.2"/>
<path d="M23.5 1.5 C16 1.5 13 5 12.5 12 C12 22 9 27 2.5 33 Q0.5 35 1.5 37 Q24 41 45.5 37 Q46.5 35 44.5 33 C38 27 35 22 34.5 12 C34 5 31 1.5 23.5 1.5Z" fill="url(#bgc)" stroke="#a88410" stroke-width="1.4"/>
<path d="M4 31.5 Q23.5 36.5 43 31.5" fill="none" stroke="#b08c12" stroke-width="1.4"/>
<path d="M29 6 L31 9 L21 24 L19.5 22Z" fill="#fff8d0"/>
<rect x="21.5" y="0" width="4" height="3" rx="1" fill="#c89c14"/>
</svg>
<div class="t" style="left:38px;top:130px;font-size:13px;letter-spacing:0.5px;color:#000">05:45:19</div>
<div class="t" style="left:112px;top:130px;font-size:13px;color:#000">Beast Scalper: PUT signal: 2022.11.09 13:45</div>
<div style="position:absolute;left:160px;top:229px;width:86px;height:26px;background:#fdfdfd;border:1px solid #d0d0d0;border-radius:4px"></div>
<div class="t" style="left:194px;top:236px;font-size:13px;color:#000">OK</div>
</div>
<div style="position:absolute;left:1555px;top:465px;width:303px;height:304px;background:#c4120c">
<div style="position:absolute;left:12px;top:17px;width:279px;height:270px;background:#fff"></div>
<div style="position:absolute;left:19px;top:24px;width:265px;height:255px;background:linear-gradient(#050505,#111 45%,#1c1c1c 80%,#0c0c0c);border:1px solid #888;overflow:hidden">
<div class="t" style="left:4.5px;top:11.8px;font-size:22px;color:#d4d4d4;transform:scaleX(0.45);transform-origin:0 0;font-weight:bold">POWERFUL BINARY OPTIONS SIGNALS SOFTWARE</div>
<div class="t" style="left:24px;top:35px;font-size:40px;color:#f51414;font-weight:bold;letter-spacing:5.1px;-webkit-text-stroke:1.6px #f51414;transform:scaleX(0.52);transform-origin:0 0">BINARY OPTIONS</div>
<div class="t" style="left:-0.7px;top:50.2px;font-size:181px;line-height:1;font-weight:bold;font-family:'Liberation Serif',serif;color:#d8d8d8;transform:scaleX(0.443);transform-origin:0 0;background:linear-gradient(#ffffff 20%,#d0d0d0 45%,#9a9a9a 70%,#e0e0e0 95%);-webkit-background-clip:text;background-clip:text;-webkit-text-fill-color:transparent">BEAST</div>
<div style="position:absolute;left:0;top:212px;width:265px;height:30px;background:linear-gradient(#2a0505,#6a0a0a 50%,#2a0505)"></div>
<div class="t" style="left:6px;top:216.3px;font-size:22px;color:#e8e8e8;font-weight:bold;transform:scaleX(0.467);transform-origin:0 0">UNLEASH THE BEAST AND BEAT YOUR BROKER</div>
</div></div>
</body></html>
